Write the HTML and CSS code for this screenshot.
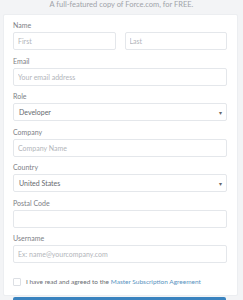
FILE: index.html
```html
<!DOCTYPE html>
<html>
<head>
<meta charset="utf-8">
<link rel="stylesheet" href="styles.css">
</head>
<body>
<p class="tagline">A full-featured copy of Force.com, for FREE.</p>
<form class="card">
  <div class="field">
    <div class="label">Name</div>
    <div class="pair">
      <input class="input" placeholder="First">
      <input class="input" placeholder="Last">
    </div>
  </div>
  <div class="field">
    <div class="label">Email</div>
    <input class="input" placeholder="Your email address">
  </div>
  <div class="field">
    <div class="label">Role</div>
    <div class="input select"><span>Developer</span><span class="arrow">▾</span></div>
  </div>
  <div class="field">
    <div class="label">Company</div>
    <input class="input" placeholder="Company Name">
  </div>
  <div class="field">
    <div class="label">Country</div>
    <div class="input select"><span>United States</span><span class="arrow">▾</span></div>
  </div>
  <div class="field">
    <div class="label">Postal Code</div>
    <input class="input">
  </div>
  <div class="field">
    <div class="label">Username</div>
    <input class="input" placeholder="Ex: name@yourcompany.com">
  </div>
  <label class="agree"><span class="box"></span><span>I have read and agreed to the <a class="link">Master Subscription Agreement</a></span></label>
</form>
<div class="button"></div>
</body>
</html>
```
FILE: styles.css
```css
html, body {
  margin: 0;
  padding: 0;
}
body {
  background: #f3f4f6;
  font-family: Lato, "Open Sans", sans-serif;
  width: 243px;
  height: 300px;
  overflow: hidden;
}
.tagline {
  margin: 0;
  padding-top: 1px;
  height: 14px;
  box-sizing: border-box;
  font-size: 7.5px;
  line-height: 8px;
  text-align: center;
  color: #a0a3a9;
}
.card {
  display: block;
  margin: 0 5px 0 3px;
  background: #fff;
  border: 1px solid #eceef1;
  border-radius: 2px;
  padding: 5px 10px 9px 9px;
}
.field {
  margin-bottom: 5.5px;
}
.label {
  font-size: 7px;
  line-height: 10px;
  color: #7d8086;
  margin-bottom: 2px;
}
.pair {
  display: grid;
  grid-template-columns: 1fr 1fr;
  gap: 9px;
}
.input {
  display: flex;
  align-items: center;
  box-sizing: border-box;
  width: 100%;
  height: 18px;
  margin: 0;
  padding: 0 4px;
  border: 1px solid #e4e7eb;
  border-radius: 2px;
  background: #fff;
  font-family: Lato, sans-serif;
  font-size: 7px;
  color: #66696f;
  outline: none;
}
.input::placeholder {
  color: #b2b5ba;
}
.select {
  justify-content: space-between;
  padding: 0 4px 0 5px;
}
.arrow {
  font-size: 6px;
  color: #666;
}
.agree {
  display: flex;
  align-items: center;
  gap: 5px;
  margin-top: 14px;
  height: 9px;
  font-size: 6.5px;
  color: #6a6d73;
}
.box {
  box-sizing: border-box;
  width: 8px;
  height: 8px;
  border: 1px solid #dcdfe4;
  border-radius: 1px;
  flex: none;
}
.link {
  color: #5a93c0;
}
.button {
  margin: 1px 17px 0 13px;
  height: 10px;
  background: #3a83bf;
  border-radius: 2px 2px 0 0;
}
```
